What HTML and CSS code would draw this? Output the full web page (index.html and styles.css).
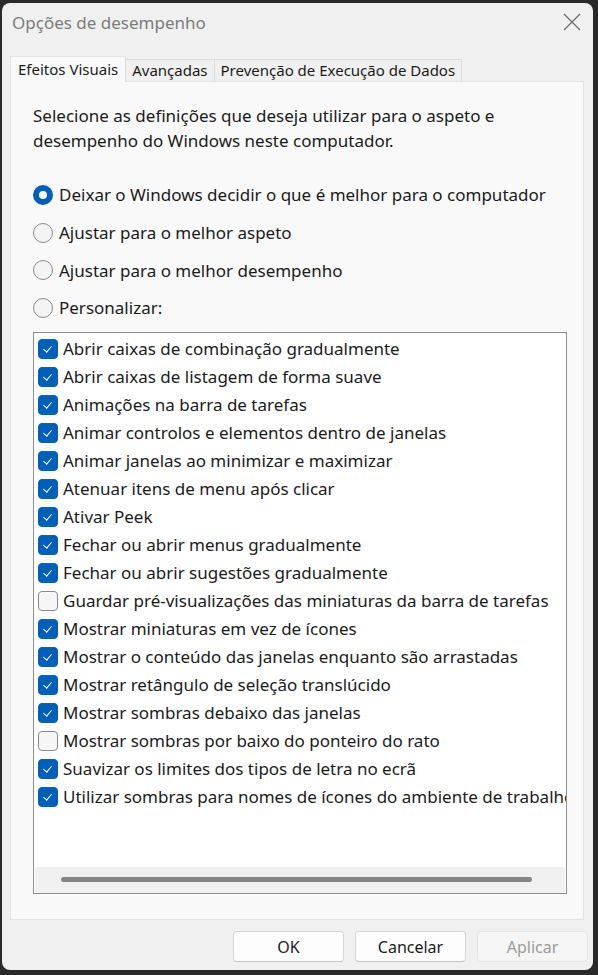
FILE: index.html
```html
<!DOCTYPE html>
<html lang="pt">
<head>
<meta charset="utf-8">
<link rel="stylesheet" href="styles.css">
<title>Opções de desempenho</title>
</head>
<body>
<div class="window">
  <div class="titlebar">
    <span class="title">Opções de desempenho</span>
    <svg class="close" width="18" height="18" viewBox="0 0 18 18"><path d="M1 1 L17 17 M17 1 L1 17" stroke="#6b6b6b" stroke-width="1.2" fill="none"/></svg>
  </div>
  <div class="tabs">
    <div class="tab active">Efeitos Visuais</div>
    <div class="tab">Avançadas</div>
    <div class="tab">Prevenção de Execução de Dados</div>
  </div>
  <div class="panel">
    <p class="desc">Selecione as definições que deseja utilizar para o aspeto e desempenho do Windows neste computador.</p>
    <div class="radios">
      <div class="radio-row"><span class="radio on"></span>Deixar o Windows decidir o que é melhor para o computador</div>
      <div class="radio-row"><span class="radio"></span>Ajustar para o melhor aspeto</div>
      <div class="radio-row"><span class="radio"></span>Ajustar para o melhor desempenho</div>
      <div class="radio-row"><span class="radio"></span>Personalizar:</div>
    </div>
    <div class="listbox">
      <div class="items">
        <div class="item"><span class="cb on"></span>Abrir caixas de combinação gradualmente</div>
        <div class="item"><span class="cb on"></span>Abrir caixas de listagem de forma suave</div>
        <div class="item"><span class="cb on"></span>Animações na barra de tarefas</div>
        <div class="item"><span class="cb on"></span>Animar controlos e elementos dentro de janelas</div>
        <div class="item"><span class="cb on"></span>Animar janelas ao minimizar e maximizar</div>
        <div class="item"><span class="cb on"></span>Atenuar itens de menu após clicar</div>
        <div class="item"><span class="cb on"></span>Ativar Peek</div>
        <div class="item"><span class="cb on"></span>Fechar ou abrir menus gradualmente</div>
        <div class="item"><span class="cb on"></span>Fechar ou abrir sugestões gradualmente</div>
        <div class="item"><span class="cb"></span>Guardar pré-visualizações das miniaturas da barra de tarefas</div>
        <div class="item"><span class="cb on"></span>Mostrar miniaturas em vez de ícones</div>
        <div class="item"><span class="cb on"></span>Mostrar o conteúdo das janelas enquanto são arrastadas</div>
        <div class="item"><span class="cb on"></span>Mostrar retângulo de seleção translúcido</div>
        <div class="item"><span class="cb on"></span>Mostrar sombras debaixo das janelas</div>
        <div class="item"><span class="cb"></span>Mostrar sombras por baixo do ponteiro do rato</div>
        <div class="item"><span class="cb on"></span>Suavizar os limites dos tipos de letra no ecrã</div>
        <div class="item"><span class="cb on"></span>Utilizar sombras para nomes de ícones do ambiente de trabalho</div>
      </div>
      <div class="hscroll"><div class="thumb"></div></div>
    </div>
  </div>
  <div class="buttons">
    <button class="btn">OK</button>
    <button class="btn">Cancelar</button>
    <button class="btn disabled">Aplicar</button>
  </div>
</div>
</body>
</html>
```
FILE: styles.css
```css
* { box-sizing: border-box; }
html, body { margin: 0; padding: 0; }
body {
  background: #2a2a2a;
  width: 598px;
  height: 975px;
  overflow: hidden;
  font-family: "Noto Sans", "Open Sans", sans-serif;
  color: #1b1b1b;
}
.window {
  margin: 3px 0 0 2px;
  width: 591px;
  height: 967px;
  background: #f0f0f0;
  border-radius: 8px;
  display: flex;
  flex-direction: column;
  padding: 0 0 0 8px;
}
.titlebar {
  height: 53px;
  display: flex;
  align-items: flex-start;
  justify-content: space-between;
  padding: 8px 12px 0 2px;
}
.title {
  font-size: 17px;
  color: #7c7c7c;
}
.close { margin-top: 2px; }
.tabs {
  display: flex;
  align-items: flex-end;
  height: 25px;
  padding-left: 1px;
  position: relative;
  z-index: 1;
}
.tab {
  font-size: 15px;
  height: 22px;
  line-height: 20px;
  padding: 0 6px;
  border: 1px solid #dcdcdc;
  border-bottom: none;
  background: #f0f0f0;
  margin-left: -1px;
}
.tab.active {
  height: 26px;
  background: #f9f9f9;
  margin-bottom: -1px;
  padding: 2px 7px 0;
  border-color: #e3e3e3;
}
.panel {
  width: 574px;
  height: 839px;
  background: #f9f9f9;
  border: 1px solid #e3e3e3;
  padding: 21px 17px 0 22px;
  display: flex;
  flex-direction: column;
}
.desc {
  margin: 0;
  font-size: 17px;
  line-height: 25px;
  width: 520px;
}
.radios {
  margin-top: 23px;
  display: flex;
  flex-direction: column;
}
.radio-row {
  display: flex;
  align-items: center;
  font-size: 17px;
  height: 37.7px;
}
.radio {
  width: 20px;
  height: 20px;
  border-radius: 50%;
  border: 1px solid #8a8a8a;
  background: #f4f4f4;
  margin-right: 6px;
  flex: none;
}
.radio.on {
  border: 6px solid #005fb8;
  background: #fff;
}
.listbox {
  margin-top: 5px;
  width: 534px;
  height: 562px;
  background: #fff;
  border: 1px solid #8f8f8f;
  display: flex;
  flex-direction: column;
}
.items {
  flex: 1;
  padding: 2px 0 0 4px;
  overflow: hidden;
  white-space: nowrap;
}
.item {
  display: flex;
  align-items: center;
  height: 28px;
  font-size: 17px;
}
.cb {
  width: 20px;
  height: 20px;
  border-radius: 4px;
  border: 1px solid #8a8a8a;
  background: #f6f6f6;
  margin-right: 5px;
  flex: none;
  position: relative;
}
.cb.on {
  background: #005fb8;
  border-color: #005fb8;
}
.cb.on::after {
  content: "";
  position: absolute;
  left: 6px;
  top: 4px;
  width: 4px;
  height: 7px;
  border-right: 1.3px solid #fff;
  border-bottom: 1.3px solid #fff;
  transform: rotate(40deg);
}
.hscroll {
  height: 26px;
  background: #f0f0f0;
  margin: 0 1px 0 1px;
  padding: 10px 0 0 26px;
  flex: none;
}
.thumb {
  width: 471px;
  height: 5px;
  border-radius: 3px;
  background: #858585;
}
.buttons {
  display: flex;
  justify-content: flex-end;
  gap: 11px;
  padding: 11px 5px 0 0;
}
.btn {
  width: 111px;
  height: 31px;
  border: 1px solid #d5d5d5;
  border-bottom-color: #c4c4c4;
  border-radius: 4px;
  background: #fdfdfd;
  font-family: inherit;
  font-size: 16px;
  color: #1b1b1b;
  padding: 0;
}
.btn.disabled {
  color: #9b9b9b;
  background: #f5f5f5;
  border-color: #e5e5e5;
}
```
